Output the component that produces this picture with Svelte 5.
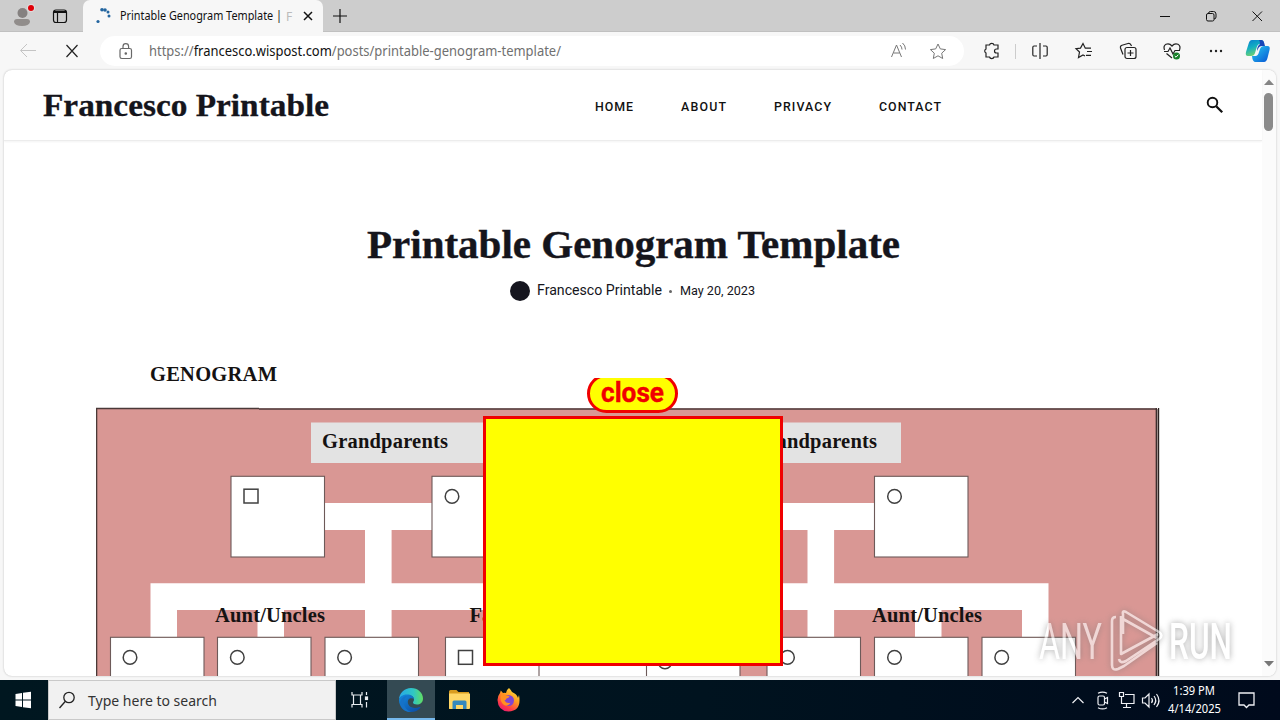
<script>
  const nav = [
    { label: 'HOME', w: 38, gap: 48 },
    { label: 'ABOUT', w: 45, gap: 48 },
    { label: 'PRIVACY', w: 57, gap: 48 },
    { label: 'CONTACT', w: 62, gap: 0 }
  ];
  const lowerBoxes = [110.5, 217.5, 325, 445.5, 646.5, 767, 874.5, 982];
  const lowerCircles = [130, 237.3, 344.6, 665, 787.5, 894.5, 1001.7];
</script>

{#snippet label(text, w, h, base, cls, mode = 'spacingAndGlyphs')}
  <svg class={cls} width={w} height={h}><text x="0" y={base} textLength={w} lengthAdjust={mode}>{text}</text></svg>
{/snippet}

<div class="screen">
  <div class="titlebar">
    <div class="tab-tools">
      <svg width="82" height="32">
        <circle cx="22.5" cy="13" r="5" fill="#858180" />
        <path d="M14 22q0-3 3-3h10q3 0 3 3q-1 4-8 4t-8-4z" fill="#918d8b" />
        <circle cx="31" cy="8" r="4" fill="#e2dcdc" /><circle cx="31" cy="8" r="3" fill="#e00008" />
        <rect x="53.5" y="10" width="13" height="12.5" rx="2.5" fill="none" stroke="#111" stroke-width="1.2" />
        <path d="M54 12h12" stroke="#111" stroke-width="2" /><path d="M57.500 12v10" stroke="#111" stroke-width="1.200" />
      </svg>
    </div>
    <div class="tab">
      <svg width="17" height="18" class="spinner" fill="#23659f">
        <circle cx="2" cy="14.500" r="1.600" /><circle cx="6" cy="2.700" r="1.800" /><circle cx="9" cy="3" r="1.800" /><circle cx="12" cy="5" r="1.500" /><circle cx="13" cy="9" r="1.500" />
      </svg>
      {@render label('Printable Genogram Template |', 162, 20, 14, 'ui tab-title')}
      <span class="fade">F</span>
      <svg width="10" height="10" class="tab-close"><path d="M1 1l8 8M9 1l-8 8" stroke="#111" stroke-width="1.500" /></svg>
    </div>
    <svg width="14" height="14" class="plus"><path d="M7 0v14M0 7h14" stroke="#111" stroke-width="1.200" /></svg>
    <svg width="120" height="32" class="wincontrols" fill="none" stroke="#111">
      <path d="M10 16.500h10M102.500 11.500l9.500 9.500M112 11.500l-9.500 9.500" />
      <rect x="56.500" y="13.500" width="7.500" height="7.500" rx="1.500" /><path d="M58.500 13.500q0-2 2-2h3q2.500 0 2.500 2.500v3q0 2-2 2" />
    </svg>
  </div>

  <div class="toolbar">
    <svg width="100" height="36" fill="none" class="navicons">
      <path d="M36 18.500H21M27 12l-6.500 6.500 6.500 6.500" stroke="#c4c4c4" /><path d="M66.500 13l11 12M77.500 13l-11 12" stroke="#222" stroke-width="1.200" />
    </svg>
    <div class="address">
      <svg width="14" height="17" class="lock" fill="none" stroke="#686868" stroke-width="1.200">
        <rect x="1" y="5.500" width="11.500" height="10" rx="1.800" /><path d="M4 5.500V3.500a2.800 2.800 0 0 1 5.600 0v2" /><circle cx="6.800" cy="10.500" r=".7" fill="#686868" />
      </svg>
      <svg width="413" height="24" class="ui url"><text x="0" y="17" textLength="412" lengthAdjust="spacingAndGlyphs">https://<tspan fill="#111">francesco.wispost.com</tspan>/posts/printable-genogram-template/</text></svg>
      <svg width="70" height="24" class="addr-icons" fill="none" stroke="#777">
        <path d="M6.500 18l5-12 5 12M8.500 14h6.200M15 6q2 2 2 4.500M17.500 4q3 2.500 3 6.500" />
        <path d="M53 5l2.300 4.900 5.300.7-3.900 3.600 1 5.300-4.700-2.700-4.700 2.700 1-5.300-3.900-3.600 5.300-.7z" />
      </svg>
    </div>
    <div class="slot ext">
      <svg width="18" height="18" fill="none" stroke="#222" stroke-width="1.200"><path d="M3 3h3.500a2.300 2 0 0 1 4.500 0H15v4h-1.500a2 2 0 0 0 0 4H15v4h-4a2.300 2 0 0 1-4.500 0H3v-4a2.200 2.200 0 0 1 0-4z" /></svg>
    </div>
    <div class="slot"><svg width="18" height="18" fill="none" stroke="#222" stroke-width="1.200"><path d="M9 1v16M6 4H3q-1.200 0-1.200 1.500v7Q1.800 14 3 14h3M12 4h3q1.200 0 1.200 1.500v7q0 1.500-1.200 1.500h-3" /></svg></div>
    <div class="slot"><svg width="18" height="18" fill="none" stroke="#222" stroke-width="1.200"><path d="M10 14l-2-1-4.500 2.500L4.500 10 1 6.700l4.500-.6L8 1.500l2.300 4.700H16M12 9.500h5M11 13.300h5" /></svg></div>
    <div class="slot"><svg width="18" height="18" fill="none" stroke="#222" stroke-width="1.200"><rect x="6" y="5.500" width="11" height="11" rx="2" /><path d="M11.500 8v6M8.500 11h6M4 12.500L1.500 6Q1 4 3 3.200L9 1.500q2-.5 3 1.500l.5 1" /></svg></div>
    <div class="slot"><svg width="18" height="18" fill="none" stroke="#222" stroke-width="1.200"><path d="M1.500 8Q0 4 3 2.300 6.500 1 9 4q2.500-3 6-1.700 3 1.700 1.500 5.700M1 9.500h4L7 6l3 6 2-3.500h5M3.500 11.500L9 16" /><circle cx="13.500" cy="14" r="3.500" fill="#18802a" stroke="none" /><path d="M11.800 14l1.200 1.200 2.300-2.500" stroke="#fff" stroke-width="1" /></svg></div>
    <div class="slot"><svg width="16" height="18" fill="#222"><circle cx="3" cy="9" r="1.200" /><circle cx="8" cy="9" r="1.200" /><circle cx="13" cy="9" r="1.200" /></svg></div>
    <div class="slot last">
      <svg width="26" height="24">
        <defs>
          <linearGradient id="cpa" x2=".4" y2="1"><stop stop-color="#087bd0" /><stop offset=".5" stop-color="#13afc1" /><stop offset="1" stop-color="#73d36e" /></linearGradient>
          <linearGradient id="cpb" x2="1" y2="1"><stop stop-color="#28cff1" /><stop offset="1" stop-color="#0753d4" /></linearGradient>
        </defs>
        <path d="M7 1h9q3 0 3 4h-4q-2.500 0-3.500 4l-1.500 5q-.8 3-4 3H3q-3 0-2-4l2.500-8Q4.500 1 7 1z" fill="url(#cpa)" />
        <path d="M14 1h2.500q2 0 2.700 3l.8 3h-3q-3 0-4 3l-1 2q0-5 3-7 0-3-1-4z" fill="#1746b8" />
        <path d="M19 23h-8.500Q7.500 23 7 17h3.500q2.500 0 3.500-4l1-3q1-3 4-3h3.500q3 0 2 4l-2 8q-1 4-3.500 4z" fill="url(#cpb)" />
      </svg>
    </div>
  </div>

  <div class="viewport">
    <div class="page">
      <header>
        {@render label('Francesco Printable', 286, 46, 33, 'brand')}
        <nav>
          {#each nav as n}
            <a href="#top" style="margin-right:{n.gap}px">{@render label(n.label, n.w, 20, 14, 'navtext', 'spacing')}</a>
          {/each}
        </nav>
        <svg width="18" height="18" class="search" fill="none" stroke="#111" stroke-width="1.900"><circle cx="6.500" cy="6.500" r="4.800" /><path d="M10.200 10.200l6 6" stroke-width="2.300" /></svg>
      </header>
      <div class="headline">{@render label('Printable Genogram Template', 533, 56, 38, 'h1')}</div>
      <div class="meta">
        <span class="avatar"></span>
        {@render label('Francesco Printable', 125, 20, 14, 'author')}
        <span class="dot"></span>
        {@render label('May 20, 2023', 75, 20, 14, 'date')}
      </div>
      <svg class="genogram" width="1064" height="316" viewBox="96 360 1064 316">
        <rect x="96.500" y="408.500" width="1061" height="300" fill="#d99794" />
        <path d="M96.500 676V408.500H259M259 409H1156" stroke="#4a3938" stroke-width="1.600" fill="none" />
        <path d="M1158.600 676V408M1156.300 676V408" stroke="#2b2322" stroke-width="1.200" />
        <path d="M1157.500 676V409" stroke="#9b8c8a" stroke-width="1" />
        <g class="serif">
          <text x="150" y="380.500" textLength="127">GENOGRAM</text>
        </g>
        <path d="M311 422.500h172v40.500H311zM740 422.500h161v40.500H740z" fill="#e3e3e3" />
        <path d="M324 503h550v27H324zM365 530h26.600v107H365zM807.500 530h26.600v107h-26.600zM150.500 583.300h898v26.700h-898zM150.500 583.300H177V637h-26.500zM257.500 610H284v27h-26.500zM915 610h26.500v27H915zM1022 610h26.500v27H1022z" fill="#fff" />
        <g fill="#fff" stroke="#6d5a59" stroke-width="1.100">
          <rect x="231" y="476.300" width="93.500" height="80.700" />
          <rect x="432" y="476.300" width="93.500" height="80.700" />
          <rect x="874.500" y="476.300" width="93.500" height="80.700" />
          <path d="M520 637h140v60H520z" stroke="none" />
          {#each lowerBoxes as x}<rect {x} y="637.300" width="93.500" height="80" />{/each}
        </g>
        <g fill="none" stroke="#404040" stroke-width="1.500">
          <rect x="244" y="489.200" width="14" height="13.800" /><rect x="458.500" y="650.500" width="14" height="13.800" />
          <circle cx="452" cy="496.400" r="6.800" /><circle cx="894.500" cy="496.400" r="6.800" />
          {#each lowerCircles as cx}<circle {cx} cy={cx === 665 ? 662 : 657.400} r="6.800" />{/each}
        </g>
        <g class="serif">
          <text x="322" y="447.800" textLength="126">Grandparents</text><text x="751" y="447.800" textLength="126">Grandparents</text>
          <text x="215" y="622" textLength="110">Aunt/Uncles</text><text x="872" y="622" textLength="110">Aunt/Uncles</text>
          <text x="469.500" y="622">Father</text>
        </g>
      </svg>
      <div class="popup">
        <div class="close-clip"><button>{@render label('close', 63, 32, 24, 'close-text')}</button></div>
        <div class="ad"></div>
      </div>
    </div>
    <div class="scrollbar">
      <svg width="10" height="6"><path d="M0 6l5-5.500L10 6z" fill="#858585" /></svg>
      <div class="thumb"></div>
      <svg width="10" height="6" class="down"><path d="M0 0l5 5.500L10 0z" fill="#777" /></svg>
    </div>
  </div>

  <svg class="watermark" width="210" height="76" viewBox="1030 602 210 76">
    <g fill="#fff">
      <text x="1039" y="659" textLength="63" lengthAdjust="spacingAndGlyphs">ANY</text>
      <text x="1169" y="659" textLength="63" lengthAdjust="spacingAndGlyphs" class="run">RUN</text>
    </g>
    <path d="M1123 634v-20q-1-4 3-2l33 20q5 3.500 0 7l-33 22q-6 3-7-2M1116 617q-4 0-4 4v44q0 6 6 4l6-3 33-23M1123 619l34 19M1121 616v38l37-20" fill="none" stroke="#fff" stroke-width="2.600" stroke-linejoin="round" />
  </svg>

  <div class="taskbar">
    <svg width="48" height="40" fill="#fff"><path d="M15.500 14l6.500-1v6.500h-6.500zM23 12.800l8-1.100v7.800h-8zM15.500 20.500H22V27l-6.500-.9zM23 20.500h8v7.800l-8-1.100z" /></svg>
    <div class="searchbox">
      <svg width="17" height="18" fill="none" stroke="#222" stroke-width="1.300"><circle cx="10" cy="6.500" r="5.200" /><path d="M6.200 10.500L.5 17" /></svg>
      {@render label('Type here to search', 129, 24, 18, 'ui searchtext')}
    </div>
    <svg width="51" height="40" fill="none" stroke="#e8edf0" stroke-width="1.200">
      <path d="M16 12v3h10v-3M16 27.500v-3h10v3M17.500 15v9.500M24.500 15v9.500M30.500 12v3M30.500 22v5.500" /><rect x="29.500" y="17" width="2" height="2.500" fill="#fff" />
    </svg>
    <div class="edge-slot">
      <svg width="24" height="24">
        <defs><linearGradient id="eg" x2="1"><stop stop-color="#27a8e8" /><stop offset=".6" stop-color="#30c7c4" /><stop offset="1" stop-color="#61de62" /></linearGradient><linearGradient id="eb" x2="1" y2="1"><stop stop-color="#148be0" /><stop offset="1" stop-color="#0c48a0" /></linearGradient></defs>
        <path d="M0 12C0 5 5.500 0 12 0c7 0 12 5 12 10.500 0 4-3 6-6 6-2.500 0-4-1-4-2 0-.8 1-1.200 1-3C15 9 12.500 7 9 7c-5 0-9 2.500-9 5z" fill="url(#eg)" />
        <path d="M0 12c0-3 3.500-5.500 8-5.500 4 0 7 2 7 5-1-1.500-5-2-6 1-1.500 5 4.500 9.500 11.500 6.500.8-.3 1.300.2.700.9C19 22.500 16 24 12 24 5 24 0 18.500 0 12z" fill="url(#eb)" />
        <path d="M8.500 8C5 10 4 14 5.500 18q2 4.500 6.500 6-7 0-10-5.500Q0 12 4.500 9q2-1 4-1z" fill="#1672c8" />
      </svg>
    </div>
    <svg width="49" height="40" class="folder">
      <path d="M14 11.500q0-1.500 1.500-1.500h6l2 2H34v17H14z" fill="#d99d20" /><path d="M14 13.500h21V28q0 1-1 1H15q-1 0-1-1z" fill="#ffd766" /><path d="M17.500 29v-7q0-1.500 1.500-1.500h11q1.500 0 1.500 1.500v7H28v-4h-7v4z" fill="#3589bd" />
    </svg>
    <svg width="49" height="40" class="firefox">
      <defs><linearGradient id="fx" x1=".8" x2=".2" y2="1"><stop stop-color="#ffe63e" /><stop offset=".4" stop-color="#ff9b20" /><stop offset=".75" stop-color="#ff3c47" /><stop offset="1" stop-color="#e31579" /></linearGradient></defs>
      <path d="M25 8q2 2 3 4 5 2 6 6l1-3q3 16-10.500 16.500Q14 31 13.500 20q0-4 2.500-7l.8-2.500L19 13q2-.4 3 .1Q22 10 25 8z" fill="url(#fx)" />
      <circle cx="24.500" cy="20.500" r="5.500" fill="#8045d2" /><path d="M17 14q3-1 5 1.500l3.500.5q-.5 2-3 2.500-.5 1.500-2 2 2 3.500 6 2.300Q24 27 20 25q-5-4-3-11z" fill="#ff9022" />
    </svg>
    <svg class="tray" width="97" height="40" fill="none" stroke="#eef0f4" stroke-width="1.200">
      <path d="M6.500 23l5.500-5.500 5.500 5.500" /><rect x="32" y="16" width="6.500" height="9" rx="1.500" /><path d="M38.500 19l3-1.500v6l-3-1.500M32 13.300q4.500-2.500 9 0M32 27.700q4.500 2.500 9 0" />
      <path d="M59 14.500h9v9H55.500v-4M60.500 23.500v4M57 27.500h8M53.500 12.500h4v4h-4zM55.500 16.500v3" />
      <path d="M76.500 18h2.500l4-4v13l-4-4h-2.500zM85.500 18q2 2.500 0 5M88 16q3.500 4.500 0 9M90.500 14q5 6.500 0 13" />
    </svg>
    <div class="clock">
      {@render label('1:39 PM', 42, 18, 13, 'ui clocktext')}
      {@render label('4/14/2025', 53, 18, 13, 'ui clocktext')}
    </div>
    <svg width="20" height="20" class="note" fill="none" stroke="#eef0f4" stroke-width="1.300"><path d="M2 3h15v12h-5l-2.500 2.500L7 15H2z" /></svg>
  </div>
</div>

<style>
  :global(body) { margin: 0; overflow: hidden; }
  .screen { width: 1280px; height: 720px; position: relative; display: flex; flex-direction: column; background: #f7f7f7; overflow: hidden; font-family: Roboto, sans-serif; }
  svg { display: block; flex: none; overflow: visible; }
  .genogram { overflow: hidden; }
  .ui { font-family: "Noto Sans", "Open Sans", sans-serif; font-size: 12px; fill: #111; }
  .titlebar { height: 32px; background: #cdcdcd; display: flex; flex: none; box-shadow: inset 0 -1px #c0c0c0; }
  .tab-tools { width: 83px; }
  .tab { width: 240px; height: 32px; background: #f7f7f7; border-radius: 7px 7px 0 0; display: flex; align-items: center; }
  .spinner { margin: 0 7px 0 13px; }
  .tab-title { font-size: 12px; }
  .fade { width: 8px; margin-left: 4px; color: #bbb; font: 12px/17px "Noto Sans", sans-serif; }
  .tab-close { margin-left: 9px; }
  .plus { margin: 9px 0 0 10px; }
  .wincontrols { margin-left: auto; margin-right: 10px; }
  .toolbar { height: 38px; flex: none; display: flex; align-items: flex-start; background: #f7f7f7; }
  .address { width: 864px; height: 30px; margin-top: 4px; border-radius: 15px; background: #fff; display: flex; align-items: center; }
  .lock { margin: 0 16px 0 19px; }
  .url { font-size: 13.5px; fill: #707070; }
  .addr-icons { margin-left: auto; margin-right: 9px; }
  .slot { width: 44px; height: 38px; display: flex; align-items: center; justify-content: center; }
  .ext { width: 52px; box-sizing: border-box; padding-left: 3px; margin-right: 2px; background: linear-gradient(#ccc, #ccc) right center / 1px 15px no-repeat; }
  .last { width: 40px; }
  .viewport { width: 1272px; height: 606px; flex: none; margin-left: 4px; background: #fff; border-radius: 8px; overflow: hidden; display: flex; box-shadow: 0 0 2px #b5b5b5; }
  .page { width: 1258px; height: 606px; position: relative; display: flex; flex-direction: column; flex: none; }
  header { height: 70px; display: flex; align-items: center; border-bottom: 1px solid #ececec; box-shadow: 0 1px 2px #f3f3f3; flex: none; }
  .brand { margin: 2px 266px 0 39px; font: bold 31px "Liberation Serif", serif; fill: #15151c; stroke: #15151c; stroke-width: .3px; }
  nav { display: flex; }
  a { color: inherit; text-decoration: none; }
  .navtext { font: 500 12.4px Roboto, sans-serif; fill: #111; margin-top: 3px; }
  .search { margin: 0 38px 0 auto; }
  .headline { margin: 79px 0 0 363px; }
  .h1 { font: bold 40px "Liberation Serif", serif; fill: #15151c; stroke: #15151c; stroke-width: .4px; }
  .meta { display: flex; align-items: center; height: 22px; margin: 4px 0 0 506px; }
  .avatar { width: 20px; height: 20px; border-radius: 50%; background: #15151e; margin-right: 7px; }
  .author { font-size: 14.5px; fill: #15151c; }
  .dot { width: 3px; height: 3px; border-radius: 50%; background: #666; margin: 0 8px 0 7px; }
  .date { font-size: 12.5px; fill: #15151c; }
  .genogram { margin: 58px 0 0 92px; }
  .serif { font: bold 20.5px "Liberation Serif", serif; fill: #151212; }
  .popup { position: absolute; left: 479px; top: 308px; width: 300px; display: flex; flex-direction: column; align-items: center; }
  .close-clip { height: 35px; overflow: hidden; display: flex; align-items: flex-end; margin: 0 1px 3px 0; }
  button { width: 91px; height: 39px; padding: 0; border: 3px solid #f00000; border-radius: 20px; background: #ff0; display: flex; align-items: center; justify-content: center; flex: none; }
  .close-text { font: bold 27px Roboto, sans-serif; fill: #f00000; stroke: #f00000; stroke-width: .4px; }
  .ad { width: 300px; height: 250px; box-sizing: border-box; border: 3px solid #f00000; background: #ff0; }
  .scrollbar { width: 14px; background: #fbfbfb; display: flex; flex-direction: column; align-items: center; padding: 9px 1px 0 0; box-sizing: border-box; }
  .thumb { width: 9px; height: 38px; margin-top: 8px; background: #8b8b8b; border-radius: 5px; }
  .down { margin-top: auto; margin-bottom: 9px; }
  .watermark { position: absolute; left: 1030px; top: 602px; opacity: .62; filter: drop-shadow(0 0 3px #777); font: 400 50px Roboto, sans-serif; }
  .run { font-weight: 500; }
  .taskbar { height: 40px; margin-top: auto; display: flex; align-items: center; background: linear-gradient(90deg, #001720, #00131f 55%, #000a1c); }
  .searchbox { width: 288px; height: 40px; box-sizing: border-box; border: 1px solid #c9c9c9; background: #f1f1f1; display: flex; align-items: center; gap: 12px; padding-left: 10px; }
  .searchtext { font-size: 15px; fill: #333; }
  .edge-slot { width: 48px; height: 40px; box-sizing: border-box; border-bottom: 2px solid #76b9ed; background: #344a53; display: flex; align-items: center; justify-content: center; padding-top: 2px; }
  .tray { margin-left: auto; }
  .clock { width: 60px; display: flex; flex-direction: column; align-items: center; margin-left: 1px; }
  .clocktext { fill: #fff; font-size: 12px; }
  .note { margin: 0 23px 0 13px; }
</style>
